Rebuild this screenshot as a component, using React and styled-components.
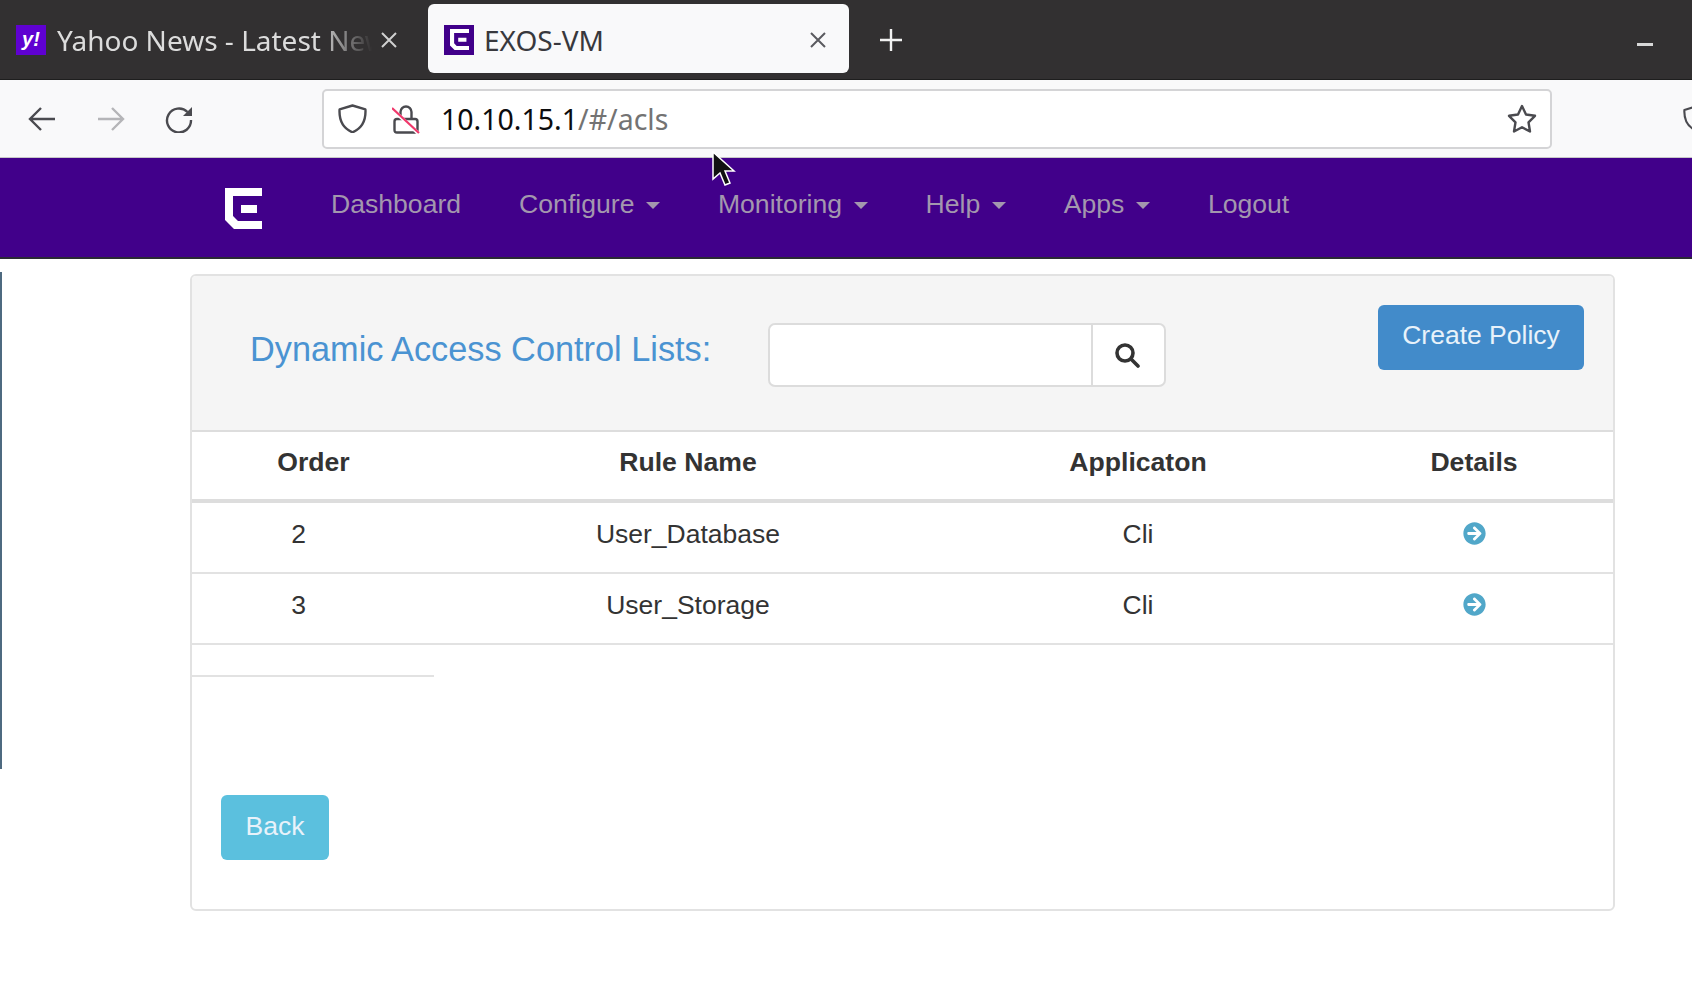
import React from 'react';
import styled, { createGlobalStyle } from 'styled-components';
import { FaArrowCircleRight } from 'react-icons/fa';

const Global = createGlobalStyle`
  html, body {
    margin: 0;
    background: #fff;
  }
  body {
    font-family: "Liberation Sans", Arial, sans-serif;
    color: #333;
    overflow: hidden;
  }
  * {
    box-sizing: border-box;
  }
`;

function ExosMark({ size, color }) {
  return (
    <svg width={size} height={size * 1.108} viewBox="0 0 37 41">
      <path
        fill={color}
        d="M0 0H37V8H8V28L13 33H37V41H9L0 32ZM16 17H32V25H16Z"
      />
    </svg>
  );
}

function CloseIcon() {
  return (
    <svg width="18" height="18" viewBox="0 0 18 18" fill="none" stroke="currentColor" strokeWidth="2">
      <path d="M2 2L16 16M16 2L2 16" />
    </svg>
  );
}

function ArrowIcon({ flip, color }) {
  return (
    <ArrowSvg $flip={flip} width="28" height="26" viewBox="0 0 28 26" fill="none" stroke={color} strokeWidth="2.4">
      <path d="M27 13H2M13 2L2 13L13 24" />
    </ArrowSvg>
  );
}

function ReloadIcon() {
  return (
    <svg width="28" height="28" viewBox="0 0 28 28" fill="none">
      <path d="M22.5 7A12 12 0 1 0 26 15" stroke="#4a4a4f" strokeWidth="2.4" />
      <path d="M27 2V11H18Z" fill="#4a4a4f" />
    </svg>
  );
}

function ShieldIcon({ size }) {
  return (
    <svg width={size} height={size * 1.03} viewBox="0 0 29 30" fill="none">
      <path
        d="M14.5 1.5L27.5 5.5C28 15 25 24 14.5 28.5C4 24 1 15 1.5 5.5Z"
        stroke="#4a4a4f"
        strokeWidth="2.4"
        strokeLinejoin="round"
      />
    </svg>
  );
}

function LockIcon() {
  return (
    <svg width="28" height="30" viewBox="0 0 28 30" fill="none">
      <path
        d="M8.5 15V8A5.5 5.5 0 0 1 19.5 8V15M5 15H23Q25.5 15 25.5 17.5V26Q25.5 28.5 23 28.5H5Q2.5 28.5 2.5 26V17.5Q2.5 15 5 15Z"
        stroke="#4a4a4f"
        strokeWidth="2.4"
      />
      <path d="M1 6L27 30" stroke="#fff" strokeWidth="3.6" />
      <path d="M0 4L27 29" stroke="#f0386b" strokeWidth="2.2" />
    </svg>
  );
}

function StarIcon() {
  return (
    <svg width="30" height="30" viewBox="0 0 30 30" fill="none">
      <path
        d="M15 2L19 10.5L28 11.8L21.5 18.3L23 27.5L15 23.2L7 27.5L8.5 18.3L2 11.8L11 10.5Z"
        stroke="#4a4a4f"
        strokeWidth="2.4"
        strokeLinejoin="round"
      />
    </svg>
  );
}

function SearchIcon() {
  return (
    <svg width="26" height="26" viewBox="0 0 26 26" fill="none" stroke="#333" strokeWidth="3.6">
      <circle cx="11" cy="11" r="8" />
      <path d="M17 17L24 24" strokeLinecap="round" />
    </svg>
  );
}

const navItems = [
  { label: 'Dashboard' },
  { label: 'Configure', caret: true },
  { label: 'Monitoring', caret: true },
  { label: 'Help', caret: true },
  { label: 'Apps', caret: true },
  { label: 'Logout' },
];

const rules = [
  { order: 2, name: 'User_Database', app: 'Cli' },
  { order: 3, name: 'User_Storage', app: 'Cli' },
];

export default function App() {
  return (
    <Page>
      <Global />
      <TabStrip>
        <Tab>
          <YahooIcon>y!</YahooIcon>
          <FadedLabel>Yahoo News - Latest News</FadedLabel>
          <TabClose $dark><CloseIcon /></TabClose>
        </Tab>
        <ActiveTab>
          <Favicon><ExosMark size={19} color="#fff" /></Favicon>
          <TabLabel>EXOS-VM</TabLabel>
          <TabClose><CloseIcon /></TabClose>
        </ActiveTab>
        <NewTab>
          <svg width="24" height="24" viewBox="0 0 24 24" stroke="#f2f2f2" strokeWidth="2.4">
            <path d="M12 1V23M1 12H23" />
          </svg>
        </NewTab>
        <WindowMin />
      </TabStrip>

      <Toolbar>
        <NavButtons>
          <ArrowIcon color="#4a4a4f" />
          <ArrowIcon flip color="#b5b5b8" />
          <ReloadIcon />
        </NavButtons>
        <UrlBar>
          <ShieldIcon size={29} />
          <LockIcon />
          <UrlText>
            <UrlHost>10.10.15.1</UrlHost>/#/acls
          </UrlText>
          <StarSlot><StarIcon /></StarSlot>
        </UrlBar>
        <ExtensionShield><ShieldIcon size={26} /></ExtensionShield>
      </Toolbar>

      <Navbar>
        <Brand><ExosMark size={37} color="#fff" /></Brand>
        <NavList>
          {navItems.map((item) => (
            <NavItem key={item.label}>
              {item.label}
              {item.caret && <Caret />}
            </NavItem>
          ))}
        </NavList>
      </Navbar>

      <Main>
        <EdgeStrip />
        <Panel>
          <PanelHeader>
            <Title>Dynamic Access Control Lists:</Title>
            <SearchGroup>
              <SearchInput />
              <SearchButton><SearchIcon /></SearchButton>
            </SearchGroup>
            <CreateButton>Create Policy</CreateButton>
          </PanelHeader>

          <HeadRow>
            <HeadCell>Order</HeadCell>
            <HeadCell>Rule Name</HeadCell>
            <HeadCell>Applicaton</HeadCell>
            <HeadCell>Details</HeadCell>
          </HeadRow>
          {rules.map((rule) => (
            <BodyRow key={rule.order}>
              <OrderCell>{rule.order}</OrderCell>
              <Cell>{rule.name}</Cell>
              <Cell>{rule.app}</Cell>
              <Cell><DetailIcon /></Cell>
            </BodyRow>
          ))}
          <ShortRule />
          <BackButton>Back</BackButton>
        </Panel>
      </Main>

      <Cursor width="24" height="36" viewBox="0 0 24 36">
        <path d="M1 1V28L8 22L13 34L18 32L13 20H22Z" fill="#111" stroke="#fff" strokeWidth="1.5" />
      </Cursor>
    </Page>
  );
}

const Page = styled.div`
  position: relative;
  width: 1692px;
  height: 982px;
  overflow: hidden;
  background: #fff;
`;

const TabStrip = styled.div`
  display: flex;
  align-items: flex-start;
  height: 80px;
  padding-top: 4px;
  background: #323031;
  border-bottom: 1px solid #1e1e1e;
`;

const Tab = styled.div`
  display: flex;
  align-items: center;
  width: 428px;
  height: 69px;
  padding: 2px 30px 0 16px;
  font-family: "Noto Sans", sans-serif;
  font-size: 28px;
  color: #dcdcdc;
`;

const ActiveTab = styled(Tab)`
  width: 421px;
  padding-right: 22px;
  background: #f9f9fa;
  border-radius: 6px;
  color: #38383d;
`;

const YahooIcon = styled.div`
  flex: none;
  width: 30px;
  height: 30px;
  background: #5f01d1;
  color: #fff;
  font-family: "Liberation Sans", sans-serif;
  font-size: 20px;
  font-weight: 700;
  font-style: italic;
  line-height: 28px;
  text-align: center;
`;

const Favicon = styled.div`
  flex: none;
  display: flex;
  align-items: center;
  justify-content: center;
  width: 30px;
  height: 30px;
  background: #41008a;
`;

const TabLabel = styled.div`
  flex: 1;
  min-width: 0;
  margin-left: 10px;
  white-space: nowrap;
  overflow: hidden;
`;

const FadedLabel = styled(TabLabel)`
  margin-left: 11px;
  -webkit-mask-image: linear-gradient(to right, #000 80%, transparent 97%);
  mask-image: linear-gradient(to right, #000 80%, transparent 97%);
`;

const TabClose = styled.div`
  flex: none;
  display: flex;
  margin-left: ${(p) => (p.$dark ? '-2px' : '7px')};
  color: ${(p) => (p.$dark ? '#d0d0d0' : '#5a5a5f')};
`;

const NewTab = styled.div`
  display: flex;
  align-items: center;
  height: 69px;
  margin-left: 30px;
  padding-top: 2px;
`;

const WindowMin = styled.div`
  width: 16px;
  height: 3px;
  margin: 39px 39px 0 auto;
  background: #d8d8d8;
`;

const Toolbar = styled.div`
  display: flex;
  align-items: center;
  height: 78px;
  padding-left: 28px;
  background: #f9f9fa;
  border-bottom: 1px solid #c8c8c8;
`;

const NavButtons = styled.div`
  display: flex;
  align-items: center;
  gap: 40.5px;
`;

const ArrowSvg = styled.svg`
  transform: ${(p) => (p.$flip ? 'scaleX(-1)' : 'none')};
`;

const UrlBar = styled.div`
  display: flex;
  align-items: center;
  flex: none;
  width: 1230px;
  height: 60px;
  margin-left: 129px;
  padding: 0 13px 0 14px;
  gap: 25px;
  background: #fff;
  border: 2px solid #d4d4d6;
  border-radius: 5px;
`;

const UrlText = styled.div`
  margin-left: -4px;
  font-family: "Noto Sans", sans-serif;
  font-size: 28.5px;
  color: #737373;
`;

const UrlHost = styled.span`
  color: #0c0c0d;
`;

const StarSlot = styled.div`
  display: flex;
  margin-left: auto;
`;

const ExtensionShield = styled.div`
  display: flex;
  flex: none;
  margin-left: 131px;
`;

const Navbar = styled.div`
  display: flex;
  align-items: center;
  height: 101px;
  padding-left: 225px;
  background: #41008a;
  border-bottom: 2px solid #2a2a35;
`;

const Brand = styled.div`
  display: flex;
  margin-top: 2px;
`;

const NavList = styled.div`
  display: flex;
  gap: 58px;
  margin-left: 69px;
  margin-top: -8px;
`;

const NavItem = styled.div`
  display: flex;
  align-items: center;
  font-size: 26.6px;
  line-height: 36px;
  color: #a397ae;
`;

const Caret = styled.span`
  width: 0;
  height: 0;
  margin-left: 11.5px;
  margin-top: 4px;
  border-top: 7px solid #a397ae;
  border-left: 7px solid transparent;
  border-right: 7px solid transparent;
`;

const Main = styled.div`
  display: flex;
  align-items: flex-start;
`;

const EdgeStrip = styled.div`
  flex: none;
  width: 2px;
  height: 497px;
  margin-top: 13px;
  background: #4e6a80;
`;

const Panel = styled.div`
  flex: none;
  width: 1425px;
  height: 637px;
  margin: 15px 0 0 188px;
  background: #fff;
  border: 2px solid #e2e2e2;
  border-radius: 6px;
  overflow: hidden;
`;

const PanelHeader = styled.div`
  display: flex;
  align-items: flex-start;
  height: 156px;
  padding: 29px 29px 0 58px;
  background: #f5f5f5;
  border-bottom: 2px solid #ddd;
`;

const Title = styled.div`
  flex: none;
  width: 518px;
  margin-top: 24px;
  font-size: 34.3px;
  line-height: 40px;
  color: #4a93d2;
`;

const SearchGroup = styled.div`
  display: flex;
  height: 64px;
  margin-top: 18px;
  background: #fff;
  border: 2px solid #dcdcdc;
  border-radius: 7px;
`;

const SearchInput = styled.div`
  width: 323px;
  border-right: 2px solid #dcdcdc;
`;

const SearchButton = styled.div`
  display: flex;
  align-items: center;
  justify-content: center;
  width: 71px;
  padding-right: 3px;
`;

const ActionButton = styled.div`
  display: flex;
  justify-content: center;
  height: 65px;
  border-radius: 6px;
  color: #e8f2fa;
  font-size: 26.5px;
  line-height: 30px;
`;

const CreateButton = styled(ActionButton)`
  width: 206px;
  margin-left: auto;
  padding-top: 15px;
  background: #428bca;
`;

const BackButton = styled(ActionButton)`
  width: 108px;
  margin: 118px 0 0 29px;
  padding-top: 16px;
  background: #5bc0de;
`;

const rowColumns = '243px 506px 394px 1fr';

const HeadRow = styled.div`
  display: grid;
  grid-template-columns: ${rowColumns};
  height: 71px;
  border-bottom: 4px solid #ddd;
`;

const HeadCell = styled.div`
  display: flex;
  justify-content: center;
  padding-top: 12px;
  font-size: 26.6px;
  font-weight: 700;
  line-height: 36px;
`;

const BodyRow = styled.div`
  display: grid;
  grid-template-columns: ${rowColumns};
  height: 71px;
  border-bottom: 2px solid #e2e2e2;
`;

const Cell = styled.div`
  display: flex;
  justify-content: center;
  padding-top: 13px;
  font-size: 26.5px;
  line-height: 36px;
`;

const OrderCell = styled(Cell)`
  padding-right: 30px;
`;

const DetailIcon = styled(FaArrowCircleRight)`
  width: 23px;
  height: 23px;
  margin-top: 6px;
  color: #51a7c9;
`;

const ShortRule = styled.div`
  width: 242px;
  height: 2px;
  margin-top: 30px;
  background: #e2e2e2;
`;

const Cursor = styled.svg`
  position: absolute;
  left: 712px;
  top: 151px;
`;
